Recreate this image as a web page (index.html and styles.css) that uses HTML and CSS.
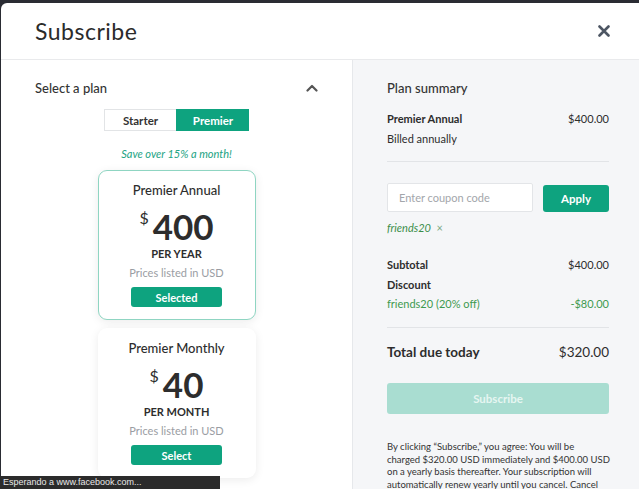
FILE: index.html
```html
<!DOCTYPE html>
<html>
<head>
<meta charset="utf-8">
<link rel="stylesheet" href="styles.css">
</head>
<body>
<div class="modal">
  <header class="modal-head">
    <h1 class="title">Subscribe</h1>
    <button class="close" aria-label="Close">
      <svg width="12" height="12" viewBox="0 0 12 12"><path d="M1.5 1.5 L10.5 10.5 M10.5 1.5 L1.5 10.5" stroke="#4d5663" stroke-width="2.6" stroke-linecap="round"/></svg>
    </button>
  </header>
  <div class="modal-body">
    <section class="plans">
      <div class="plans-head">
        <span class="plans-title">Select a plan</span>
        <svg class="chev" width="12" height="8" viewBox="0 0 12 8"><path d="M1.5 6.5 L6 2 L10.5 6.5" fill="none" stroke="#555" stroke-width="2.2" stroke-linecap="round" stroke-linejoin="round"/></svg>
      </div>
      <div class="toggle">
        <span class="seg">Starter</span>
        <span class="seg seg-on">Premier</span>
      </div>
      <p class="save">Save over 15% a month!</p>
      <div class="card card-on">
        <div class="card-name">Premier Annual</div>
        <div class="price"><span class="cur">$</span><span class="amt">400</span></div>
        <div class="per">PER YEAR</div>
        <div class="note">Prices listed in USD</div>
        <span class="btn-card">Selected</span>
      </div>
      <div class="card">
        <div class="card-name">Premier Monthly</div>
        <div class="price"><span class="cur">$</span><span class="amt">40</span></div>
        <div class="per">PER MONTH</div>
        <div class="note">Prices listed in USD</div>
        <span class="btn-card">Select</span>
      </div>
    </section>
    <section class="summary">
      <h2 class="sum-title">Plan summary</h2>
      <div class="row"><span class="b">Premier Annual</span><span>$400.00</span></div>
      <div class="row sub">Billed annually</div>
      <hr class="rule rule1">
      <div class="coupon">
        <input class="coupon-input" placeholder="Enter coupon code">
        <span class="apply">Apply</span>
      </div>
      <div class="tag">friends20 <span class="tag-x">×</span></div>
      <div class="row r-sub"><span class="b">Subtotal</span><span>$400.00</span></div>
      <div class="row r-disc"><span class="b">Discount</span></div>
      <div class="row r-code green"><span>friends20 (20% off)</span><span>-$80.00</span></div>
      <hr class="rule rule2">
      <div class="row total"><span class="b">Total due today</span><span>$320.00</span></div>
      <div class="subscribe">Subscribe</div>
      <p class="legal">By clicking “Subscribe,” you agree: You will be<br>charged $320.00 USD immediately and $400.00 USD on a yearly basis thereafter. Your subscription will automatically renew yearly until you cancel. Cancel anytime in your account settings to avoid future charges.</p>
    </section>
  </div>
</div>
<div class="status">Esperando a www.facebook.com...</div>
</body>
</html>
```

FILE: styles.css
```css
html, body {
  margin: 0;
  padding: 0;
  height: 100%;
  overflow: hidden;
  background: #2a2c33;
}
body {
  font-family: Lato, "Open Sans", sans-serif;
  color: #2d2d2d;
}
.modal {
  margin-top: 3px;
  margin-left: 1px;
  height: 486px;
  background: #fff;
  border-top-left-radius: 6px;
  display: flex;
  flex-direction: column;
  overflow: hidden;
}
.modal-head {
  height: 56px;
  flex: none;
  border-bottom: 1px solid #e9eaec;
  display: flex;
  align-items: center;
  justify-content: space-between;
  padding: 0 28px 0 34px;
}
.title {
  margin: 0;
  font-size: 23px;
  font-weight: 400;
  color: #2b2b2b;
  letter-spacing: 0.5px;
}
.close {
  border: 0;
  background: none;
  padding: 0;
  width: 14px;
  height: 14px;
  display: flex;
  align-items: center;
  justify-content: center;
}
.modal-body {
  flex: 1;
  display: grid;
  grid-template-columns: 352px 1fr;
}
.plans {
  border-right: 1px solid #e6e8eb;
  padding: 20px 34px 0 34px;
  display: flex;
  flex-direction: column;
  align-items: center;
}
.plans-head {
  align-self: stretch;
  display: flex;
  justify-content: space-between;
  align-items: center;
  height: 16px;
}
.plans-title {
  font-size: 13px;
  font-weight: 500;
  color: #333;
}
.toggle {
  margin-top: 13px;
  display: flex;
  height: 22px;
}
.seg {
  width: 72px;
  display: flex;
  align-items: center;
  justify-content: center;
  font-size: 11.5px;
  font-weight: 700;
  color: #333;
  border: 1px solid #e2e4e6;
  border-right: 0;
  box-sizing: border-box;
}
.seg-on {
  background: #0ea37f;
  border-color: #0ea37f;
  color: #fff;
  width: 73px;
}
.save {
  margin: 16px 0 0;
  font-size: 11px;
  line-height: 14px;
  font-style: italic;
  color: #22a383;
}
.card {
  margin-top: 9px;
  width: 158px;
  box-sizing: border-box;
  border: 1px solid transparent;
  border-radius: 9px;
  background: #fff;
  box-shadow: 0 2px 10px rgba(0,0,0,0.08);
  padding: 11px 0 12px;
  display: flex;
  flex-direction: column;
  align-items: center;
}
.card + .card { margin-top: 8px; }
.card-on { border-color: #8fd5c2; }
.card-name {
  font-size: 13px;
  line-height: 16px;
  font-weight: 500;
  color: #2d2d2d;
}
.price {
  margin-top: 10px;
  height: 36px;
  display: flex;
  align-items: flex-start;
}
.cur {
  font-size: 16px;
  line-height: 16px;
  margin-top: 2px;
  margin-right: 4px;
  color: #2d2d2d;
}
.amt {
  font-size: 35px;
  line-height: 36px;
  font-weight: 700;
  color: #2d2d2d;
}
.per {
  margin-top: 3px;
  font-size: 11px;
  line-height: 14px;
  font-weight: 700;
  color: #2d2d2d;
}
.note {
  margin-top: 5px;
  font-size: 11px;
  line-height: 14px;
  color: #9a9da3;
}
.btn-card {
  margin-top: 7px;
  width: 91px;
  height: 20px;
  border-radius: 3px;
  background: #0ea37f;
  color: #fff;
  font-size: 11px;
  font-weight: 700;
  display: flex;
  align-items: center;
  justify-content: center;
}
.summary {
  background: #f5f6f8;
  padding: 20px 30px 0 34px;
}
.sum-title {
  margin: 0;
  font-size: 13px;
  line-height: 16px;
  font-weight: 500;
  color: #333;
}
.row {
  display: flex;
  justify-content: space-between;
  font-size: 11px;
  line-height: 14px;
  color: #2d2d2d;
}
.b { font-weight: 700; }
.summary .sum-title + .row { margin-top: 16px; }
.sub { margin-top: 6px; }
.rule {
  border: 0;
  border-top: 1px solid #e2e4e7;
  margin: 0;
}
.rule1 { margin-top: 15px; }
.coupon {
  margin-top: 21px;
  display: flex;
  align-items: flex-start;
  gap: 10px;
}
.coupon-input {
  width: 146px;
  height: 29px;
  box-sizing: border-box;
  border: 1px solid #e3e5e8;
  border-radius: 2px;
  background: #fff;
  padding: 0 11px;
  font-family: inherit;
  font-size: 11px;
  outline: none;
}
.coupon-input::placeholder { color: #a3a6ab; }
.apply {
  margin-top: 2px;
  flex: 1;
  height: 27px;
  border-radius: 3px;
  background: #0ea37f;
  color: #fff;
  font-size: 11.5px;
  font-weight: 700;
  display: flex;
  align-items: center;
  justify-content: center;
}
.tag {
  margin-top: 9px;
  font-size: 11px;
  line-height: 14px;
  font-style: italic;
  color: #3c8e4a;
}
.tag-x {
  font-style: normal;
  color: #7aa983;
  margin-left: 3px;
}
.r-sub { margin-top: 23px; }
.r-disc { margin-top: 6px; }
.r-code { margin-top: 5px; }
.green { color: #3f9a50; }
.rule2 { margin-top: 16px; }
.total {
  margin-top: 16px;
  font-size: 13.5px;
  line-height: 17px;
}
.subscribe {
  margin-top: 22px;
  height: 31px;
  border-radius: 3px;
  background: #a9ddd1;
  color: #e6f6f1;
  font-size: 11.5px;
  font-weight: 700;
  display: flex;
  align-items: center;
  justify-content: center;
}
.legal {
  margin: 27px -3px 0 0;
  font-size: 9.5px;
  line-height: 12.7px;
  color: #333;
}
.status {
  position: fixed;
  left: 0;
  bottom: 0;
  width: 217px;
  height: 13px;
  padding-left: 3px;
  background: #2b2b2b;
  color: #e8e8e8;
  font-family: "Liberation Sans", Arial, sans-serif;
  font-size: 9px;
  line-height: 13px;
  white-space: nowrap;
}
```
